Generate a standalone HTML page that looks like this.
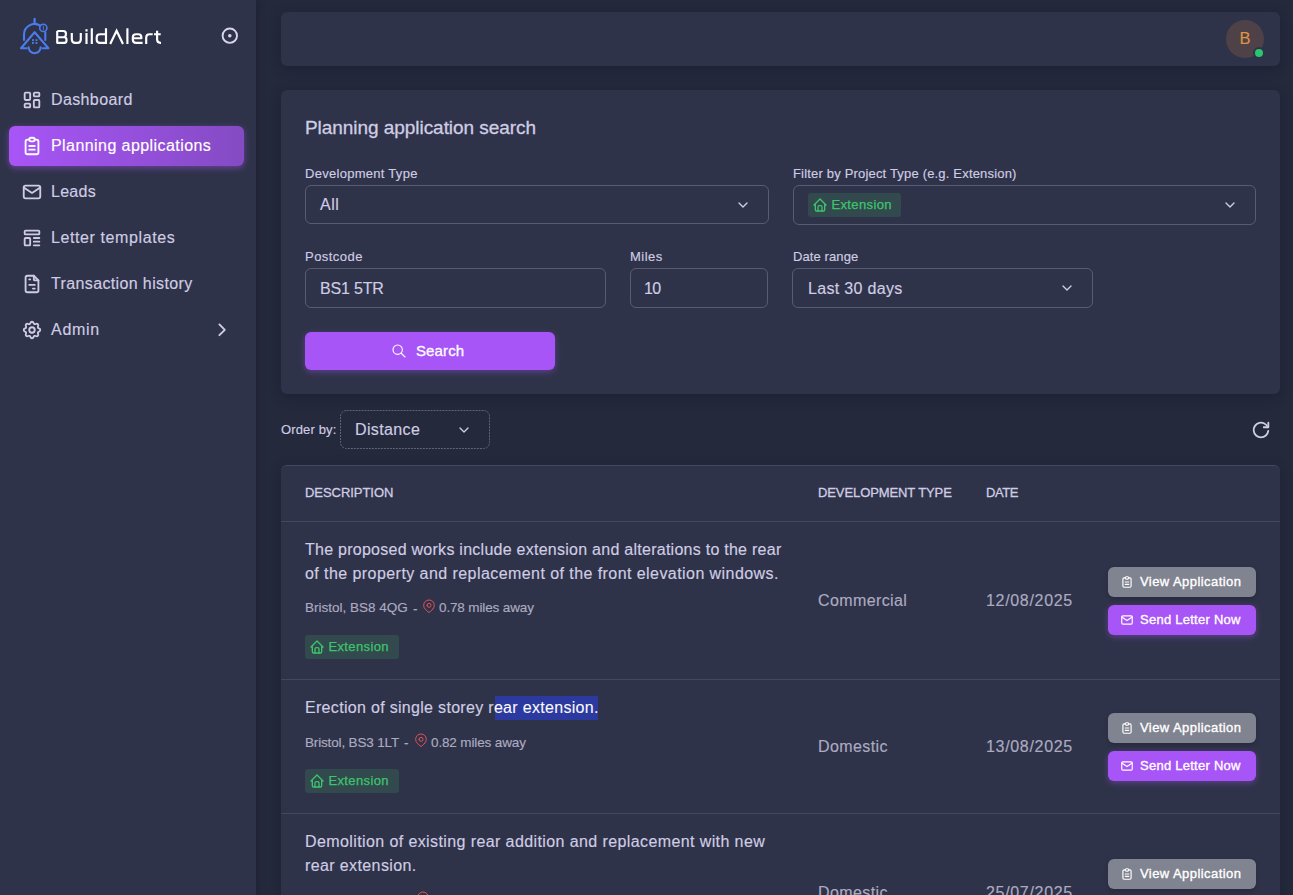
<!DOCTYPE html>
<html><head><meta charset="utf-8">
<style>
*{box-sizing:border-box;margin:0;padding:0}
html,body{width:1293px;height:895px;overflow:hidden;background:#25293C;font-family:"Liberation Sans",sans-serif;color:#CFCDE4}
.a{position:absolute;white-space:nowrap}
svg{position:absolute;overflow:visible}
</style></head><body>

<div style="position:absolute;left:0px;top:0px;width:256px;height:895px;background:#2F3349;box-shadow:0 0 8px rgba(10,12,25,.35)"></div>
<svg style="left:0;top:0" width="256" height="70" viewBox="0 0 256 70" fill="none" stroke="#4B7BEC" stroke-width="2.1" stroke-linecap="round" stroke-linejoin="round">
<path d="M34.6 19V22.4" stroke-width="2.3"/>
<path d="M24 40V34.6A10.6 10.6 0 0 1 40.2 25.6"/>
<path d="M45.3 32.4V40"/>
<circle cx="43.3" cy="27.9" r="3.6" stroke-width="1.6"/>
<path d="M43.4 26.2v3.4" stroke-width="0.9"/>
<path d="M26.6 48.2H21L34.6 32.2L48.4 48.2H42.6"/>
<path d="M28.6 47.3A6 6 0 0 0 40.6 47.3"/>
<g fill="#4B7BEC" stroke="none"><rect x="32" y="39.2" width="1.9" height="1.9"/><rect x="35.5" y="39.2" width="1.9" height="1.9"/><rect x="32" y="42" width="1.9" height="1.9"/><rect x="35.5" y="42" width="1.9" height="1.9"/></g>
</svg>
<svg style="left:0;top:0" width="256" height="70" viewBox="0 0 256 70" fill="none" stroke="#FFFFFF" stroke-width="2.15" stroke-linecap="butt" stroke-linejoin="round">
<path d="M57.2 31H63.4Q65.9 31 65.9 33.6V34.6Q65.9 37.2 63.4 37.2H57.2M57.2 37.2H64.4Q66.5 37.2 66.5 39.8V40.4Q66.5 42.8 64.4 42.8H57.2V31"/>
<path d="M71.8 33V39.2Q71.8 42.8 75.2 42.8H77.4Q80.8 42.8 80.8 39.2V33"/>
<path d="M86.5 33V44M86.5 29.2V31.4"/>
<path d="M91.8 28.3V44"/>
<path d="M106 28.3V44M106 34.2H100Q96.7 34.2 96.7 37.6V39.4Q96.7 42.8 100 42.8H106"/>
<path d="M110.2 44L116.6 30.8L123 44" stroke-linejoin="miter"/>
<path d="M127.4 28.3V44"/>
<path d="M142.6 42.8H136Q132.8 42.8 132.8 39.4V37.6Q132.8 34.2 136 34.2H138.2Q141.4 34.2 141.4 37.6V38.2H132.8"/>
<path d="M146.2 44V37.6Q146.2 34.2 149.6 34.2H152.7"/>
<path d="M157.1 30.7V39.6Q157.1 42.8 160.3 42.8H161M154 34.2H160.7"/>
</svg>
<svg style="left:0;top:0" width="256" height="70" fill="none" stroke="#D8D6EE" stroke-width="1.9"><circle cx="229.8" cy="35.7" r="7.2"/><circle cx="229.8" cy="35.7" r="1.8" fill="#D8D6EE" stroke="none"/></svg>
<svg style="left:21px;top:89px" width="22" height="22" viewBox="0 0 24 24" fill="none" stroke="#CFCDE4" stroke-width="2" stroke-linecap="round" stroke-linejoin="round"><path d="M5 4h4a1 1 0 0 1 1 1v6a1 1 0 0 1 -1 1h-4a1 1 0 0 1 -1 -1v-6a1 1 0 0 1 1 -1"/><path d="M5 16h4a1 1 0 0 1 1 1v2a1 1 0 0 1 -1 1h-4a1 1 0 0 1 -1 -1v-2a1 1 0 0 1 1 -1"/><path d="M15 12h4a1 1 0 0 1 1 1v6a1 1 0 0 1 -1 1h-4a1 1 0 0 1 -1 -1v-6a1 1 0 0 1 1 -1"/><path d="M15 4h4a1 1 0 0 1 1 1v2a1 1 0 0 1 -1 1h-4a1 1 0 0 1 -1 -1v-2a1 1 0 0 1 1 -1"/></svg>
<div class="a" style="left:51px;top:89px;font-size:16px;line-height:22px;color:#CFCDE4;letter-spacing:0.378px;-webkit-text-stroke:0.15px #CFCDE4">Dashboard</div>
<div style="position:absolute;left:9px;top:126px;width:235px;height:40px;border-radius:6px;background:linear-gradient(270deg,#844BC3 0%,#A855F7 100%);box-shadow:0 2px 6px rgba(168,85,247,.48)"></div>
<svg style="left:21px;top:135px" width="22" height="22" viewBox="0 0 24 24" fill="none" stroke="#FFFFFF" stroke-width="2" stroke-linecap="round" stroke-linejoin="round"><path d="M9 5h-2a2 2 0 0 0 -2 2v12a2 2 0 0 0 2 2h10a2 2 0 0 0 2 -2v-12a2 2 0 0 0 -2 -2h-2"/><path d="M9 5a2 2 0 0 1 2 -2h2a2 2 0 0 1 2 2v0a2 2 0 0 1 -2 2h-2a2 2 0 0 1 -2 -2z"/><path d="M9 12h6"/><path d="M9 16h6"/></svg>
<div class="a" style="left:51px;top:135px;font-size:16px;line-height:22px;color:#FFFFFF;letter-spacing:0.429px;-webkit-text-stroke:0.15px #FFFFFF">Planning applications</div>
<svg style="left:21px;top:181px" width="22" height="22" viewBox="0 0 24 24" fill="none" stroke="#CFCDE4" stroke-width="2" stroke-linecap="round" stroke-linejoin="round"><path d="M3 7a2 2 0 0 1 2 -2h14a2 2 0 0 1 2 2v10a2 2 0 0 1 -2 2h-14a2 2 0 0 1 -2 -2v-10z"/><path d="M3 7l9 6l9 -6"/></svg>
<div class="a" style="left:51px;top:181px;font-size:16px;line-height:22px;color:#CFCDE4;letter-spacing:0.277px;-webkit-text-stroke:0.15px #CFCDE4">Leads</div>
<svg style="left:21px;top:227px" width="22" height="22" viewBox="0 0 24 24" fill="none" stroke="#CFCDE4" stroke-width="2" stroke-linecap="round" stroke-linejoin="round"><path d="M4 5a1 1 0 0 1 1 -1h14a1 1 0 0 1 1 1v2a1 1 0 0 1 -1 1h-14a1 1 0 0 1 -1 -1z"/><path d="M4 13a1 1 0 0 1 1 -1h4a1 1 0 0 1 1 1v6a1 1 0 0 1 -1 1h-4a1 1 0 0 1 -1 -1z"/><path d="M14 12l6 0"/><path d="M14 16l6 0"/><path d="M14 20l6 0"/></svg>
<div class="a" style="left:51px;top:227px;font-size:16px;line-height:22px;color:#CFCDE4;letter-spacing:0.598px;-webkit-text-stroke:0.15px #CFCDE4">Letter templates</div>
<svg style="left:21px;top:273px" width="22" height="22" viewBox="0 0 24 24" fill="none" stroke="#CFCDE4" stroke-width="2" stroke-linecap="round" stroke-linejoin="round"><path d="M14 3v4a1 1 0 0 0 1 1h4"/><path d="M17 21h-10a2 2 0 0 1 -2 -2v-14a2 2 0 0 1 2 -2h7l5 5v11a2 2 0 0 1 -2 2z"/><path d="M9 7l1 0"/><path d="M9 13l6 0"/><path d="M13 17l2 0"/></svg>
<div class="a" style="left:51px;top:273px;font-size:16px;line-height:22px;color:#CFCDE4;letter-spacing:0.368px;-webkit-text-stroke:0.15px #CFCDE4">Transaction history</div>
<svg style="left:21px;top:319px" width="22" height="22" viewBox="0 0 24 24" fill="none" stroke="#CFCDE4" stroke-width="2" stroke-linecap="round" stroke-linejoin="round"><path d="M10.325 4.317c.426 -1.756 2.924 -1.756 3.35 0a1.724 1.724 0 0 0 2.573 1.066c1.543 -.94 3.31 .826 2.37 2.37a1.724 1.724 0 0 0 1.065 2.572c1.756 .426 1.756 2.924 0 3.35a1.724 1.724 0 0 0 -1.066 2.573c.94 1.543 -.826 3.31 -2.37 2.37a1.724 1.724 0 0 0 -2.572 1.065c-.426 1.756 -2.924 1.756 -3.35 0a1.724 1.724 0 0 0 -2.573 -1.066c-1.543 .94 -3.31 -.826 -2.37 -2.37a1.724 1.724 0 0 0 -1.065 -2.572c-1.756 -.426 -1.756 -2.924 0 -3.35a1.724 1.724 0 0 0 1.066 -2.573c-.94 -1.543 .826 -3.31 2.37 -2.37c1 .608 2.296 .07 2.572 -1.065z"/><path d="M9 12a3 3 0 1 0 6 0a3 3 0 0 0 -6 0"/></svg>
<div class="a" style="left:51px;top:319px;font-size:16px;line-height:22px;color:#CFCDE4;letter-spacing:0.712px;-webkit-text-stroke:0.15px #CFCDE4">Admin</div>
<svg style="left:0;top:0" width="256" height="400" fill="none" stroke="#CFCDE4" stroke-width="1.9" stroke-linecap="round" stroke-linejoin="round"><path d="M219.4 324.4L224.8 329.8L219.4 335.2"/></svg>
<div style="position:absolute;left:281px;top:12px;width:999px;height:54px;background:#2F3349;border-radius:6px;box-shadow:0 3px 12px rgba(15,20,34,.35)"></div>
<div style="position:absolute;left:1226px;top:20px;width:38px;height:38px;border-radius:50%;background:#4F4148"></div>
<div class="a" style="left:1226px;top:19px;font-size:16.5px;line-height:38px;color:#DE9441;letter-spacing:0px;-webkit-text-stroke:0.15px #DE9441;width:38px;text-align:center">B</div>
<div style="position:absolute;left:1253px;top:47px;width:12px;height:12px;border-radius:50%;background:#28C76F;border:2px solid #2F3349"></div>
<div style="position:absolute;left:281px;top:90px;width:999px;height:304px;background:#2F3349;border-radius:6px;box-shadow:0 3px 12px rgba(15,20,34,.35)"></div>
<div class="a" style="left:305px;top:117px;font-size:19px;line-height:22px;color:#CFCDE4;letter-spacing:-0.05px;-webkit-text-stroke:0.3px #CFCDE4">Planning application search</div>
<div class="a" style="left:305px;top:166px;font-size:13px;line-height:16px;color:#CFCDE4;letter-spacing:0.282px;-webkit-text-stroke:0.15px #CFCDE4">Development Type</div>
<div style="position:absolute;left:305px;top:185px;width:464px;height:39px;border:1px solid #595B72;border-radius:6px"></div>
<div class="a" style="left:320px;top:195px;font-size:16px;line-height:20px;color:#CFCDE4;letter-spacing:0.5px;-webkit-text-stroke:0.15px #CFCDE4">All</div>
<svg style="left:735px;top:197px" width="16" height="16" viewBox="0 0 24 24" fill="none" stroke="#CFCDE4" stroke-width="2" stroke-linecap="round" stroke-linejoin="round"><path d="M6 9l6 6l6 -6"/></svg>
<div class="a" style="left:793px;top:166px;font-size:13px;line-height:16px;color:#CFCDE4;letter-spacing:0.181px;-webkit-text-stroke:0.15px #CFCDE4">Filter by Project Type (e.g. Extension)</div>
<div style="position:absolute;left:793px;top:185px;width:463px;height:40px;border:1px solid #595B72;border-radius:6px"></div>
<div style="position:absolute;left:808px;top:193px;width:93px;height:24px;background:#324A4E;border-radius:3px"></div>
<svg style="left:812px;top:197px" width="16" height="16" viewBox="0 0 24 24" fill="none" stroke="#3DC46D" stroke-width="2" stroke-linecap="round" stroke-linejoin="round"><path d="M5 12l-2 0l9 -9l9 9l-2 0"/><path d="M5 12v7a2 2 0 0 0 2 2h10a2 2 0 0 0 2 -2v-7"/><path d="M9 21v-6a2 2 0 0 1 2 -2h2a2 2 0 0 1 2 2v6"/></svg>
<div class="a" style="left:831.4px;top:193px;font-size:13px;line-height:24px;color:#3DC46D;letter-spacing:0.38px;-webkit-text-stroke:0.25px #3DC46D">Extension</div>
<svg style="left:1222px;top:197px" width="16" height="16" viewBox="0 0 24 24" fill="none" stroke="#CFCDE4" stroke-width="2" stroke-linecap="round" stroke-linejoin="round"><path d="M6 9l6 6l6 -6"/></svg>
<div class="a" style="left:305px;top:249px;font-size:13px;line-height:16px;color:#CFCDE4;letter-spacing:0.461px;-webkit-text-stroke:0.15px #CFCDE4">Postcode</div>
<div style="position:absolute;left:305px;top:268px;width:301px;height:40px;border:1px solid #595B72;border-radius:6px"></div>
<div class="a" style="left:320px;top:279px;font-size:16px;line-height:20px;color:#CFCDE4;letter-spacing:-0.177px;-webkit-text-stroke:0.15px #CFCDE4">BS1 5TR</div>
<div class="a" style="left:630px;top:249px;font-size:13px;line-height:16px;color:#CFCDE4;letter-spacing:0.491px;-webkit-text-stroke:0.15px #CFCDE4">Miles</div>
<div style="position:absolute;left:630px;top:268px;width:138px;height:40px;border:1px solid #595B72;border-radius:6px"></div>
<div class="a" style="left:644px;top:279px;font-size:16px;line-height:20px;color:#CFCDE4;letter-spacing:-0.598px;-webkit-text-stroke:0.15px #CFCDE4">10</div>
<div class="a" style="left:793px;top:249px;font-size:13px;line-height:16px;color:#CFCDE4;letter-spacing:0.1px;-webkit-text-stroke:0.15px #CFCDE4">Date range</div>
<div style="position:absolute;left:792px;top:268px;width:301px;height:40px;border:1px solid #595B72;border-radius:6px"></div>
<div class="a" style="left:808px;top:279px;font-size:16px;line-height:20px;color:#CFCDE4;letter-spacing:0.325px;-webkit-text-stroke:0.15px #CFCDE4">Last 30 days</div>
<svg style="left:1059px;top:280px" width="16" height="16" viewBox="0 0 24 24" fill="none" stroke="#CFCDE4" stroke-width="2" stroke-linecap="round" stroke-linejoin="round"><path d="M6 9l6 6l6 -6"/></svg>
<div style="position:absolute;left:305px;top:332px;width:250px;height:38px;border-radius:6px;background:#A855F7;box-shadow:0 2px 6px rgba(168,85,247,.4)"></div>
<svg style="left:391.1px;top:342.8px" width="16" height="16" viewBox="0 0 24 24" fill="none" stroke="#fff" stroke-width="1.7" stroke-linecap="round" stroke-linejoin="round"><path d="M10 10m-7 0a7 7 0 1 0 14 0a7 7 0 1 0 -14 0"/><path d="M21 21l-6 -6"/></svg>
<div class="a" style="left:416px;top:341px;font-size:15px;line-height:20px;color:#FFFFFF;letter-spacing:0.12px;-webkit-text-stroke:0.3px #FFFFFF">Search</div>
<div class="a" style="left:281px;top:422px;font-size:13px;line-height:16px;color:#CFCDE4;letter-spacing:0.141px;-webkit-text-stroke:0.15px #CFCDE4">Order by:</div>
<svg style="left:340px;top:410px" width="150" height="39"><rect x="0.5" y="0.5" width="149" height="38" rx="6" fill="none" stroke="#62647A" stroke-width="1" stroke-dasharray="2 1"/></svg>
<div class="a" style="left:355px;top:420px;font-size:16px;line-height:20px;color:#CFCDE4;letter-spacing:0.364px;-webkit-text-stroke:0.15px #CFCDE4">Distance</div>
<svg style="left:456px;top:422px" width="16" height="16" viewBox="0 0 24 24" fill="none" stroke="#CFCDE4" stroke-width="2" stroke-linecap="round" stroke-linejoin="round"><path d="M6 9l6 6l6 -6"/></svg>
<svg style="left:1250px;top:419px" width="22" height="22" viewBox="0 0 24 24" fill="none" stroke="#CFCDE4" stroke-width="2" stroke-linecap="round" stroke-linejoin="round"><path d="M19.933 13.041a8 8 0 1 1 -9.925 -8.788c3.899 -1 7.935 1.007 9.425 4.747"/><path d="M20 4v5h-5"/></svg>
<div style="position:absolute;left:281px;top:465px;width:999px;height:460px;background:#2F3349;border-radius:6px;box-shadow:0 3px 12px rgba(15,20,34,.35);border-top:1px solid #45485E"></div>
<div class="a" style="left:305px;top:485px;font-size:13px;line-height:16px;color:#CFCDE4;letter-spacing:-0.05px;-webkit-text-stroke:0.3px #CFCDE4">DESCRIPTION</div>
<div class="a" style="left:818px;top:485px;font-size:13px;line-height:16px;color:#CFCDE4;letter-spacing:-0.1px;-webkit-text-stroke:0.3px #CFCDE4">DEVELOPMENT TYPE</div>
<div class="a" style="left:986px;top:485px;font-size:13px;line-height:16px;color:#CFCDE4;letter-spacing:-0.4px;-webkit-text-stroke:0.3px #CFCDE4">DATE</div>
<div style="position:absolute;left:281px;top:521px;width:999px;height:1px;background:#44475E"></div>
<div class="a" style="left:305px;top:538px;font-size:16px;line-height:24px;color:#CFCDE4;letter-spacing:0.26px;-webkit-text-stroke:0.15px #CFCDE4">The proposed works include extension and alterations to the rear</div>
<div class="a" style="left:305px;top:562px;font-size:16px;line-height:24px;color:#CFCDE4;letter-spacing:0.435px;-webkit-text-stroke:0.15px #CFCDE4">of the property and replacement of the front elevation windows.</div>
<div class="a" style="left:305px;top:599px;font-size:13.5px;line-height:18px;color:#ACABC1;letter-spacing:0px;-webkit-text-stroke:0.15px #ACABC1">Bristol, BS8 4QG</div>
<div class="a" style="left:413px;top:600px;font-size:13.5px;line-height:18px;color:#ACABC1;letter-spacing:0px;-webkit-text-stroke:0.15px #ACABC1">-</div>
<svg style="left:421px;top:598px" width="16" height="16" viewBox="0 0 24 24" fill="none" stroke="#EA5455" stroke-width="1.4" stroke-linecap="round" stroke-linejoin="round"><path d="M9 11a3 3 0 1 0 6 0a3 3 0 0 0 -6 0"/><path d="M17.657 16.657l-4.243 4.243a2 2 0 0 1 -2.827 0l-4.244 -4.243a8 8 0 1 1 11.314 0z"/></svg>
<div class="a" style="left:439px;top:599px;font-size:13.5px;line-height:18px;color:#ACABC1;letter-spacing:-0.132px;-webkit-text-stroke:0.15px #ACABC1">0.78 miles away</div>
<div style="position:absolute;left:305px;top:635px;width:94px;height:24px;background:#324A4E;border-radius:3px"></div><svg style="left:309px;top:639px" width="16" height="16" viewBox="0 0 24 24" fill="none" stroke="#3DC46D" stroke-width="2" stroke-linecap="round" stroke-linejoin="round"><path d="M5 12l-2 0l9 -9l9 9l-2 0"/><path d="M5 12v7a2 2 0 0 0 2 2h10a2 2 0 0 0 2 -2v-7"/><path d="M9 21v-6a2 2 0 0 1 2 -2h2a2 2 0 0 1 2 2v6"/></svg><div class="a" style="left:328.4px;top:635px;font-size:13px;line-height:24px;color:#3DC46D;letter-spacing:0.38px;-webkit-text-stroke:0.25px #3DC46D">Extension</div>
<div class="a" style="left:818px;top:591px;font-size:16px;line-height:20px;color:#ACABC1;letter-spacing:0.39px;-webkit-text-stroke:0.15px #ACABC1">Commercial</div>
<div class="a" style="left:986px;top:591px;font-size:16px;line-height:20px;color:#ACABC1;letter-spacing:0.68px;-webkit-text-stroke:0.15px #ACABC1">12/08/2025</div>
<div style="position:absolute;left:1108px;top:567px;width:148px;height:30px;border-radius:6px;background:#808390;box-shadow:0 2px 4px rgba(20,20,30,.25)"></div><svg style="left:1120px;top:575px" width="14" height="14" viewBox="0 0 24 24" fill="none" stroke="#fff" stroke-width="2" stroke-linecap="round" stroke-linejoin="round"><path d="M9 5h-2a2 2 0 0 0 -2 2v12a2 2 0 0 0 2 2h10a2 2 0 0 0 2 -2v-12a2 2 0 0 0 -2 -2h-2"/><path d="M9 5a2 2 0 0 1 2 -2h2a2 2 0 0 1 2 2v0a2 2 0 0 1 -2 2h-2a2 2 0 0 1 -2 -2z"/><path d="M9 12h6"/><path d="M9 16h6"/></svg><div class="a" style="left:1140px;top:573px;font-size:13px;line-height:18px;color:#FFFFFF;letter-spacing:0.43px;-webkit-text-stroke:0.35px #FFFFFF">View Application</div><div style="position:absolute;left:1108px;top:605px;width:148px;height:30px;border-radius:6px;background:#A855F7;box-shadow:0 2px 6px rgba(168,85,247,.4)"></div><svg style="left:1120px;top:613px" width="14" height="14" viewBox="0 0 24 24" fill="none" stroke="#fff" stroke-width="2" stroke-linecap="round" stroke-linejoin="round"><path d="M3 7a2 2 0 0 1 2 -2h14a2 2 0 0 1 2 2v10a2 2 0 0 1 -2 2h-14a2 2 0 0 1 -2 -2v-10z"/><path d="M3 7l9 6l9 -6"/></svg><div class="a" style="left:1140px;top:611px;font-size:13px;line-height:18px;color:#FFFFFF;letter-spacing:0.26px;-webkit-text-stroke:0.35px #FFFFFF">Send Letter Now</div>
<div style="position:absolute;left:281px;top:679px;width:999px;height:1px;background:#44475E"></div>
<div style="position:absolute;left:495px;top:696px;width:103px;height:24px;background:#2C3AA0"></div>
<div class="a" style="left:305px;top:696px;font-size:16px;line-height:24px;color:#CFCDE4;letter-spacing:0.31px;-webkit-text-stroke:0.15px #CFCDE4">Erection of single storey r<span style="color:#fff">ear extension.</span></div>
<div class="a" style="left:305px;top:734px;font-size:13.5px;line-height:18px;color:#ACABC1;letter-spacing:-0.16px;-webkit-text-stroke:0.15px #ACABC1">Bristol, BS3 1LT</div>
<div class="a" style="left:404px;top:734px;font-size:13.5px;line-height:18px;color:#ACABC1;letter-spacing:0px;-webkit-text-stroke:0.15px #ACABC1">-</div>
<svg style="left:412.5px;top:732px" width="16" height="16" viewBox="0 0 24 24" fill="none" stroke="#EA5455" stroke-width="1.4" stroke-linecap="round" stroke-linejoin="round"><path d="M9 11a3 3 0 1 0 6 0a3 3 0 0 0 -6 0"/><path d="M17.657 16.657l-4.243 4.243a2 2 0 0 1 -2.827 0l-4.244 -4.243a8 8 0 1 1 11.314 0z"/></svg>
<div class="a" style="left:431px;top:734px;font-size:13.5px;line-height:18px;color:#ACABC1;letter-spacing:-0.132px;-webkit-text-stroke:0.15px #ACABC1">0.82 miles away</div>
<div style="position:absolute;left:305px;top:769px;width:94px;height:24px;background:#324A4E;border-radius:3px"></div><svg style="left:309px;top:773px" width="16" height="16" viewBox="0 0 24 24" fill="none" stroke="#3DC46D" stroke-width="2" stroke-linecap="round" stroke-linejoin="round"><path d="M5 12l-2 0l9 -9l9 9l-2 0"/><path d="M5 12v7a2 2 0 0 0 2 2h10a2 2 0 0 0 2 -2v-7"/><path d="M9 21v-6a2 2 0 0 1 2 -2h2a2 2 0 0 1 2 2v6"/></svg><div class="a" style="left:328.4px;top:769px;font-size:13px;line-height:24px;color:#3DC46D;letter-spacing:0.38px;-webkit-text-stroke:0.25px #3DC46D">Extension</div>
<div class="a" style="left:818px;top:737px;font-size:16px;line-height:20px;color:#ACABC1;letter-spacing:0.403px;-webkit-text-stroke:0.15px #ACABC1">Domestic</div>
<div class="a" style="left:986px;top:737px;font-size:16px;line-height:20px;color:#ACABC1;letter-spacing:0.68px;-webkit-text-stroke:0.15px #ACABC1">13/08/2025</div>
<div style="position:absolute;left:1108px;top:713px;width:148px;height:30px;border-radius:6px;background:#808390;box-shadow:0 2px 4px rgba(20,20,30,.25)"></div><svg style="left:1120px;top:721px" width="14" height="14" viewBox="0 0 24 24" fill="none" stroke="#fff" stroke-width="2" stroke-linecap="round" stroke-linejoin="round"><path d="M9 5h-2a2 2 0 0 0 -2 2v12a2 2 0 0 0 2 2h10a2 2 0 0 0 2 -2v-12a2 2 0 0 0 -2 -2h-2"/><path d="M9 5a2 2 0 0 1 2 -2h2a2 2 0 0 1 2 2v0a2 2 0 0 1 -2 2h-2a2 2 0 0 1 -2 -2z"/><path d="M9 12h6"/><path d="M9 16h6"/></svg><div class="a" style="left:1140px;top:719px;font-size:13px;line-height:18px;color:#FFFFFF;letter-spacing:0.43px;-webkit-text-stroke:0.35px #FFFFFF">View Application</div><div style="position:absolute;left:1108px;top:751px;width:148px;height:30px;border-radius:6px;background:#A855F7;box-shadow:0 2px 6px rgba(168,85,247,.4)"></div><svg style="left:1120px;top:759px" width="14" height="14" viewBox="0 0 24 24" fill="none" stroke="#fff" stroke-width="2" stroke-linecap="round" stroke-linejoin="round"><path d="M3 7a2 2 0 0 1 2 -2h14a2 2 0 0 1 2 2v10a2 2 0 0 1 -2 2h-14a2 2 0 0 1 -2 -2v-10z"/><path d="M3 7l9 6l9 -6"/></svg><div class="a" style="left:1140px;top:757px;font-size:13px;line-height:18px;color:#FFFFFF;letter-spacing:0.26px;-webkit-text-stroke:0.35px #FFFFFF">Send Letter Now</div>
<div style="position:absolute;left:281px;top:813px;width:999px;height:1px;background:#44475E"></div>
<div class="a" style="left:305px;top:830px;font-size:16px;line-height:24px;color:#CFCDE4;letter-spacing:0.399px;-webkit-text-stroke:0.15px #CFCDE4">Demolition of existing rear addition and replacement with new</div>
<div class="a" style="left:305px;top:854px;font-size:16px;line-height:24px;color:#CFCDE4;letter-spacing:0.386px;-webkit-text-stroke:0.15px #CFCDE4">rear extension.</div>
<svg style="left:415px;top:889.5px" width="16" height="16" viewBox="0 0 24 24" fill="none" stroke="#EA5455" stroke-width="1.4" stroke-linecap="round" stroke-linejoin="round"><path d="M9 11a3 3 0 1 0 6 0a3 3 0 0 0 -6 0"/><path d="M17.657 16.657l-4.243 4.243a2 2 0 0 1 -2.827 0l-4.244 -4.243a8 8 0 1 1 11.314 0z"/></svg>
<div class="a" style="left:818px;top:883px;font-size:16px;line-height:20px;color:#ACABC1;letter-spacing:0.403px;-webkit-text-stroke:0.15px #ACABC1">Domestic</div>
<div class="a" style="left:986px;top:883px;font-size:16px;line-height:20px;color:#ACABC1;letter-spacing:0.68px;-webkit-text-stroke:0.15px #ACABC1">25/07/2025</div>
<div style="position:absolute;left:1108px;top:859px;width:148px;height:30px;border-radius:6px;background:#808390;box-shadow:0 2px 4px rgba(20,20,30,.25)"></div><svg style="left:1120px;top:867px" width="14" height="14" viewBox="0 0 24 24" fill="none" stroke="#fff" stroke-width="2" stroke-linecap="round" stroke-linejoin="round"><path d="M9 5h-2a2 2 0 0 0 -2 2v12a2 2 0 0 0 2 2h10a2 2 0 0 0 2 -2v-12a2 2 0 0 0 -2 -2h-2"/><path d="M9 5a2 2 0 0 1 2 -2h2a2 2 0 0 1 2 2v0a2 2 0 0 1 -2 2h-2a2 2 0 0 1 -2 -2z"/><path d="M9 12h6"/><path d="M9 16h6"/></svg><div class="a" style="left:1140px;top:865px;font-size:13px;line-height:18px;color:#FFFFFF;letter-spacing:0.43px;-webkit-text-stroke:0.35px #FFFFFF">View Application</div>
</body></html>
